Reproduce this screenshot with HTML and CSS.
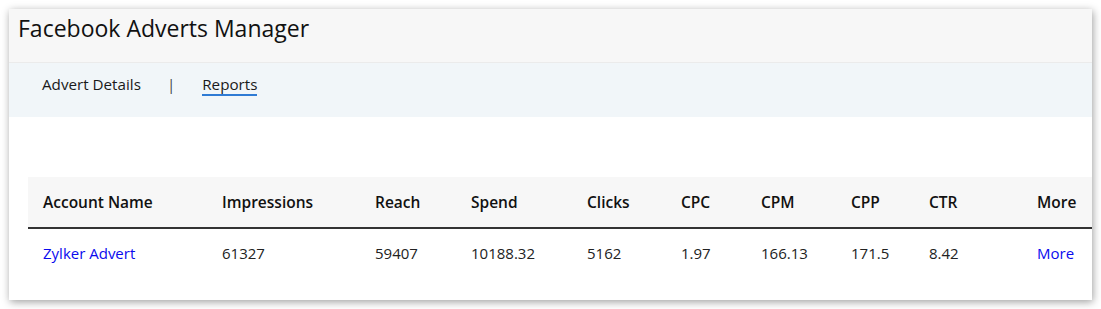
FILE: index.html
```
<!DOCTYPE html>
<html>
<head>
  <meta charset="utf-8">
  <title>Facebook Adverts Manager</title>
  <link rel="stylesheet" href="styles.css">
</head>
<body>
  <div class="card">
    <div class="card-head">
      <h1>Facebook Adverts Manager</h1>
    </div>
    <div class="tabs">
      <span class="tab">Advert Details</span>
      <span class="tab-sep">|</span>
      <span class="tab active">Reports</span>
    </div>

    <table class="report">
      <colgroup>
        <col class="c-name">
        <col class="c-impr">
        <col class="c-reach">
        <col class="c-spend">
        <col class="c-clicks">
        <col class="c-cpc">
        <col class="c-cpm">
        <col class="c-cpp">
        <col class="c-ctr">
        <col class="c-more">
      </colgroup>
      <thead>
        <tr>
          <th>Account Name</th>
          <th>Impressions</th>
          <th>Reach</th>
          <th>Spend</th>
          <th>Clicks</th>
          <th>CPC</th>
          <th>CPM</th>
          <th>CPP</th>
          <th>CTR</th>
          <th>More</th>
        </tr>
      </thead>
      <tbody>
        <tr>
          <td><a href="#">Zylker Advert</a></td>
          <td>61327</td>
          <td>59407</td>
          <td>10188.32</td>
          <td>5162</td>
          <td>1.97</td>
          <td>166.13</td>
          <td>171.5</td>
          <td>8.42</td>
          <td><a href="#">More</a></td>
        </tr>
      </tbody>
    </table>
  </div>
</body>
</html>
```

FILE: styles.css
```
body {
  margin: 0;
  padding: 9px;
  background: #ffffff;
  font-family: "Open Sans", sans-serif;
  color: #222222;
}
.card {
  background: #ffffff;
  height: 291px;
  box-sizing: border-box;
  box-shadow: 1px 2px 8px rgba(0, 0, 0, 0.38);
}
.card-head {
  background: #f7f7f7;
  height: 53px;
  border-bottom: 1px solid #ebebeb;
  padding-left: 9px;
}
h1 {
  margin: 0;
  padding-top: 3px;
  font-size: 23px;
  font-weight: normal;
  color: #111111;
}
.tabs {
  background: #f1f6f9;
  height: 54px;
  padding: 11px 0 0 33px;
  box-sizing: border-box;
  display: flex;
  align-items: flex-start;
  font-size: 15.2px;
  color: #1a1a1a;
}
.tab {
  line-height: 20px;
}
.tab-sep {
  line-height: 20px;
  margin: 0 27px 0 26px;
  color: #444444;
}
.tab.active {
  border-bottom: 2px solid #2f7bd4;
}
.report {
  margin: 60px 0 0 19px;
  width: 1064px;
  border-collapse: collapse;
  table-layout: fixed;
  font-size: 15px;
}
.c-name { width: 179px; }
.c-impr { width: 153px; }
.c-reach { width: 96px; }
.c-spend { width: 116px; }
.c-clicks { width: 94px; }
.c-cpc { width: 80px; }
.c-cpm { width: 90px; }
.c-cpp { width: 78px; }
.c-ctr { width: 108px; }
.c-more { width: 70px; }
.report th {
  background: #f7f7f7;
  text-align: left;
  font-size: 15.5px;
  font-weight: 600;
  color: #111111;
  height: 50px;
  padding: 0 0 0 15px;
  border-bottom: 2px solid #333333;
}
.report td {
  height: 47px;
  padding: 0 0 0 15px;
}
.report a {
  color: #0a0aee;
  text-decoration: none;
}
```
